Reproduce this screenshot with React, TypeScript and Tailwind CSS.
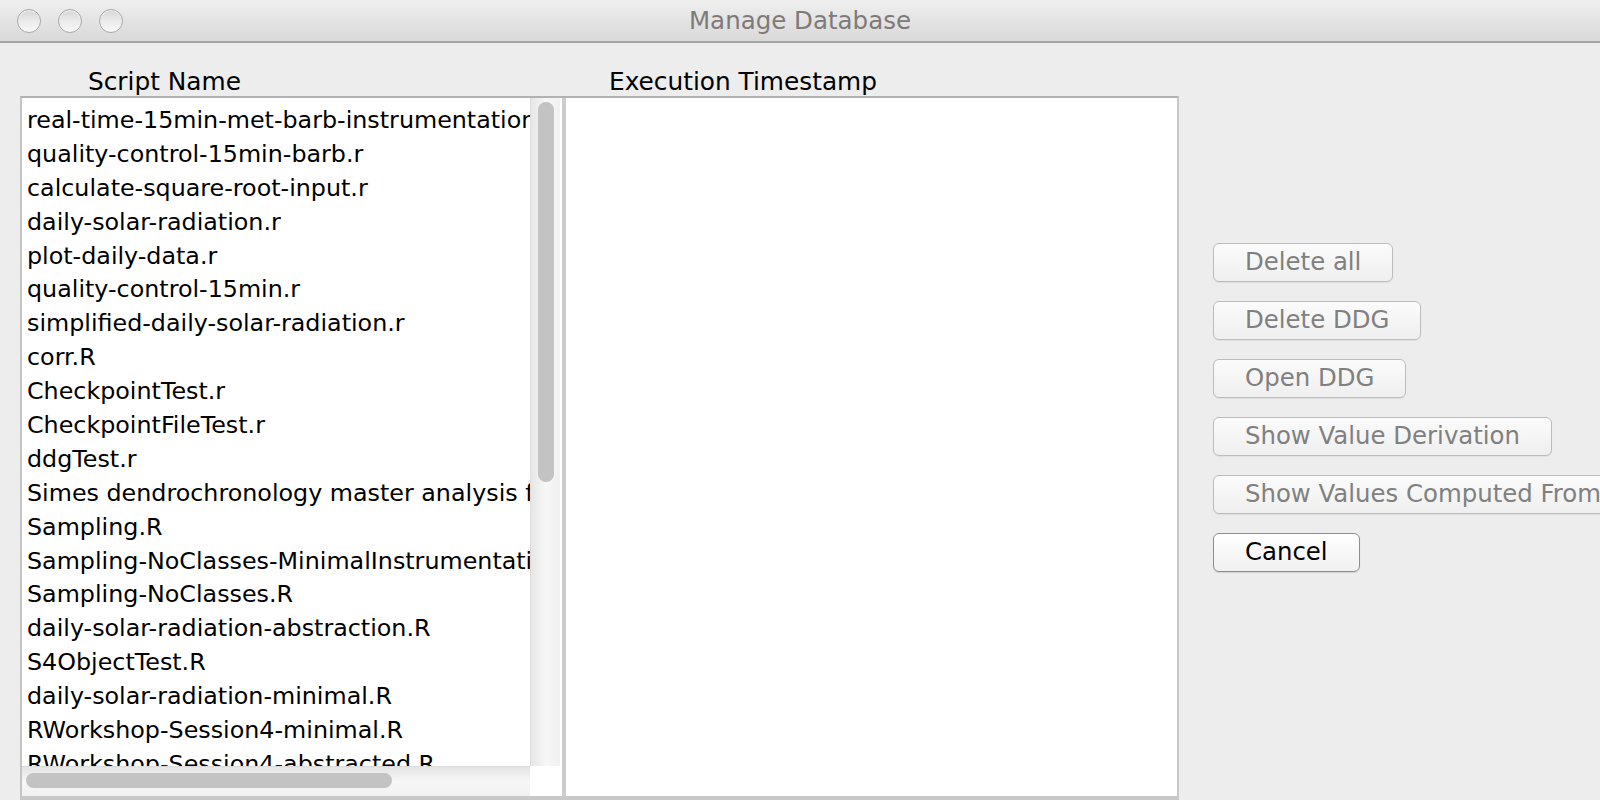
import React from 'react';

const scripts = [
  'real-time-15min-met-barb-instrumentation.r',
  'quality-control-15min-barb.r',
  'calculate-square-root-input.r',
  'daily-solar-radiation.r',
  'plot-daily-data.r',
  'quality-control-15min.r',
  'simplified-daily-solar-radiation.r',
  'corr.R',
  'CheckpointTest.r',
  'CheckpointFileTest.r',
  'ddgTest.r',
  'Simes dendrochronology master analysis file.r',
  'Sampling.R',
  'Sampling-NoClasses-MinimalInstrumentation.R',
  'Sampling-NoClasses.R',
  'daily-solar-radiation-abstraction.R',
  'S4ObjectTest.R',
  'daily-solar-radiation-minimal.R',
  'RWorkshop-Session4-minimal.R',
  'RWorkshop-Session4-abstracted.R',
  'RWorkshop-Session4.R',
];

const actions = [
  { label: 'Delete all', enabled: false },
  { label: 'Delete DDG', enabled: false },
  { label: 'Open DDG', enabled: false },
  { label: 'Show Value Derivation', enabled: false },
  { label: 'Show Values Computed From', enabled: false },
  { label: 'Cancel', enabled: true },
];

const TrafficLight: React.FC = () => (
  <div className="w-[24px] h-[24px] rounded-full border border-[#a8a8a8] bg-gradient-to-b from-[#d6d6d6] via-[#ebebeb] to-[#f8f8f8] shadow-[inset_0_1px_1px_rgba(255,255,255,0.8)]" />
);

const App: React.FC = () => {
  return (
    <div className="w-[1600px] h-[800px] overflow-hidden bg-[#ededed] flex flex-col font-['DejaVu_Sans',sans-serif] select-none">
      {/* Title bar */}
      <div className="relative h-[43px] shrink-0 flex items-center bg-gradient-to-b from-[#efefef] to-[#d9d9d9] border-b-2 border-[#a3a3a3]">
        <div className="flex items-center gap-[17px] pl-[17px] pt-[1px]">
          <TrafficLight />
          <TrafficLight />
          <TrafficLight />
        </div>
        <div className="absolute inset-0 flex items-center justify-center text-[24.5px] text-[#80797a] leading-none pt-[2px]">
          Manage Database
        </div>
      </div>

      {/* Body */}
      <div className="flex flex-1 min-h-0">
        <div className="ml-[20px] w-[1159px] shrink-0 flex flex-col">
          {/* Column headers */}
          <div className="h-[53px] shrink-0 flex text-[24.8px] text-black leading-[26px] pt-[26px]">
            <div className="w-[546px] pl-[68px]">Script Name</div>
            <div className="pl-[43px]">Execution Timestamp</div>
          </div>

          {/* Split pane */}
          <div className="flex-1 flex border-t-2 border-t-[#b2b2b2] border-l-2 border-l-[#c4c4c4] border-r-2 border-r-[#c8c8c8] border-b-4 border-b-[#c8c8c8] min-h-0">
            {/* Left list */}
            <div className="w-[540px] shrink-0 flex flex-col bg-white">
              <div className="flex-1 flex min-h-0">
                <div className="w-[508px] overflow-hidden pt-[6px] pl-[5px] text-[23.8px] text-black">
                  {scripts.map((s) => (
                    <div key={s} className="h-[33.9px] leading-[33.9px] whitespace-nowrap">
                      {s}
                    </div>
                  ))}
                </div>
                <div className="w-[30px] shrink-0 bg-gradient-to-r from-[#e6e6e6] via-[#f7f7f7] to-[#f1f1f1] border-l border-[#dedede] pt-[4px]">
                  <div className="ml-[7px] w-[16px] h-[380px] rounded-full bg-[#c3c3c3]" />
                </div>
                <div className="w-[2px] shrink-0 bg-white" />
              </div>
              <div className="h-[30px] shrink-0 flex">
                <div className="w-[508px] bg-gradient-to-b from-[#e4e4e4] via-[#f7f7f7] to-[#f1f1f1] border-t border-[#dadada] pt-[6px] pl-[4px]">
                  <div className="w-[366px] h-[15px] rounded-full bg-[#c3c3c3]" />
                </div>
                <div className="flex-1 bg-white" />
              </div>
            </div>

            {/* Divider */}
            <div className="w-[4px] shrink-0 bg-[#cccccc]" />

            {/* Right timestamps pane */}
            <div className="flex-1 bg-white" />
          </div>
        </div>

        {/* Buttons */}
        <div className="ml-[34px] pt-[200px] flex flex-col items-start gap-[19px] shrink-0">
          {actions.map((a) => (
            <button
              key={a.label}
              disabled={!a.enabled}
              className={
                a.enabled
                  ? 'h-[39px] px-[31px] whitespace-nowrap rounded-[6px] border border-[#8e8e8e] bg-gradient-to-b from-white to-[#f0f0f0] text-[24.4px] leading-none text-black shadow-[0_1px_1px_rgba(0,0,0,0.12)]'
                  : 'h-[39px] px-[31px] whitespace-nowrap rounded-[6px] border border-[#bcbcbc] bg-gradient-to-b from-[#fbfbfb] to-[#efefef] text-[24.4px] leading-none text-[#808080] shadow-[0_1px_1px_rgba(0,0,0,0.06)]'
              }
            >
              {a.label}
            </button>
          ))}
        </div>
      </div>
    </div>
  );
};

export default App;
